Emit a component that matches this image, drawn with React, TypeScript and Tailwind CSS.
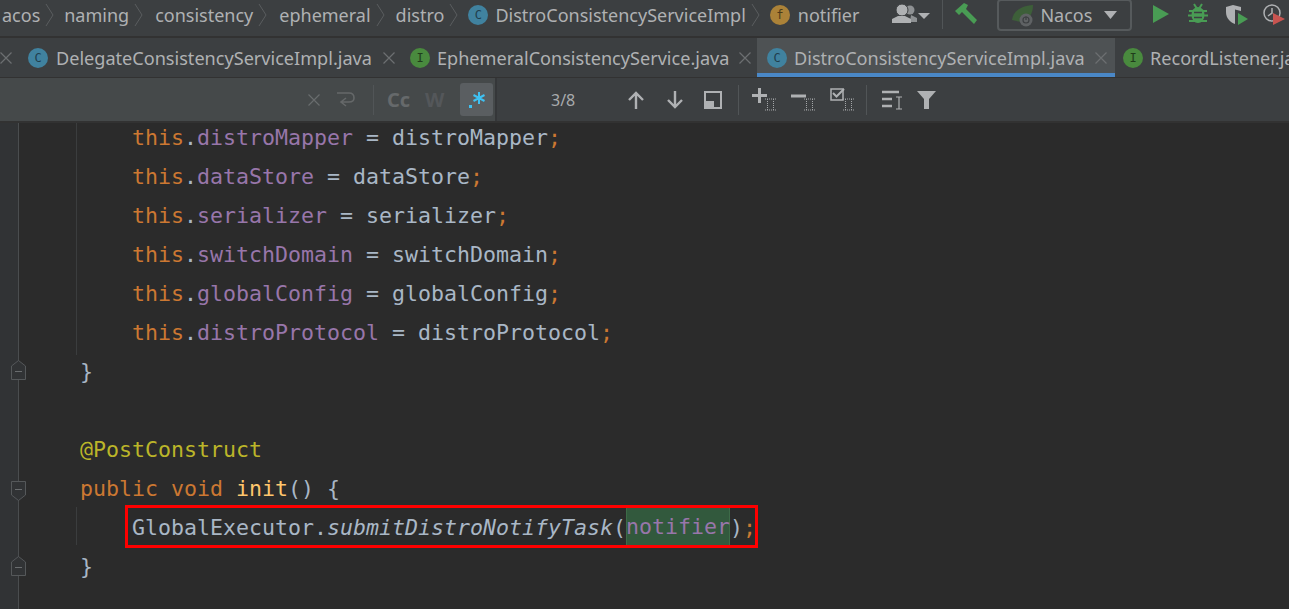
import React from 'react';

const uiFont = "font-['Noto_Sans','Open_Sans',sans-serif]";

function Chevron() {
  return (
    <svg width="9" height="24" viewBox="0 0 9 24" className="mx-[5px] shrink-0">
      <path d="M1 1 L8 12 L1 23" fill="none" stroke="#5a5d5f" strokeWidth="1" />
    </svg>
  );
}

function Badge({ letter, kind }: { letter: string; kind: 'c' | 'i' | 'f' }) {
  const tone =
    kind === 'c'
      ? 'bg-[#40829f] text-[#1f3e4d]'
      : kind === 'i'
      ? 'bg-[#498a3e] text-[#203c1b]'
      : 'bg-[#ab8238] text-[#4c3a18]';
  return (
    <span className={`w-5 h-5 rounded-full shrink-0 flex items-center justify-center text-[12px] leading-none font-['DejaVu_Sans_Mono',monospace] ${tone}`}>
      {letter}
    </span>
  );
}

function CloseX({ color = '#6c6f71' }: { color?: string }) {
  return (
    <svg width="12" height="12" viewBox="0 0 12 12" className="shrink-0">
      <path d="M0.5 0.5 L11.5 11.5 M11.5 0.5 L0.5 11.5" stroke={color} strokeWidth="1.2" />
    </svg>
  );
}

function Tab({ name, letter, kind, active, pl, gap, close, width }: { name: string; letter: string; kind: 'c' | 'i'; active?: boolean; pl: string; gap: string; close?: boolean; width: string }) {
  return (
    <div className={`h-full shrink-0 pt-px flex items-center relative ${pl} ${gap} ${width} ${active ? 'bg-[#4e5254]' : ''}`}>
      <Badge letter={letter} kind={kind} />
      <span className="text-[18.1px] text-[#afb1b3] whitespace-nowrap leading-none">{name}</span>
      {close && <span className="ml-[3px]"><CloseX /></span>}
      {active && <div className="absolute left-0 right-0 bottom-0 h-1 bg-[#4a88c7]" />}
    </div>
  );
}

function VSep({ h = 'h-[30px]', mx }: { h?: string; mx: string }) {
  return <div className={`w-px shrink-0 bg-[#515557] ${h} ${mx}`} />;
}

function IIMark() {
  return (
    <path
      d="M13 11 H18 M15.5 11 V22 M13 22 H18 M19 11 H24 M21.5 11 V22 M19 22 H24"
      stroke="#a3a6a8"
      strokeWidth="1"
      strokeDasharray="1 1"
      fill="none"
    />
  );
}

function ToolIcon({ children, w = 26, h = 24, cls }: { children: React.ReactNode; w?: number; h?: number; cls: string }) {
  return (
    <svg width={w} height={h} viewBox={`0 0 ${w} ${h}`} className={`shrink-0 ${cls}`}>
      {children}
    </svg>
  );
}

const cOrange = 'text-[#cc7832]';
const cPurple = 'text-[#9876aa]';

function ThisLine({ field, arg }: { field: string; arg: string }) {
  return (
    <Row indent>
      <span className={cOrange}>this</span>
      <span>.</span>
      <span className={cPurple}>{field}</span>
      <span> = {arg}</span>
      <span className={cOrange}>;</span>
    </Row>
  );
}

function Row({ children, indent }: { children?: React.ReactNode; indent?: boolean }) {
  return <div className={`h-[39px] leading-[39px] whitespace-pre ${indent ? 'pl-[52px]' : ''}`}>{children}</div>;
}

function FoldMark({ dir, cls }: { dir: 'up' | 'down'; cls: string }) {
  return (
    <svg width="15" height="20" viewBox="0 0 15 20" className={`absolute left-[11px] ${cls}`}>
      {dir === 'up' ? (
        <path d="M0.5 19.5 V6 L7.5 0.5 L14.5 6 V19.5 Z" fill="#313335" stroke="#55585a" />
      ) : (
        <path d="M0.5 0.5 V14 L7.5 19.5 L14.5 14 V0.5 Z" fill="#313335" stroke="#55585a" />
      )}
      <path d={dir === 'up' ? 'M4 11.5 H11' : 'M4 8.5 H11'} stroke="#6a6d6f" />
    </svg>
  );
}

export default function App() {
  return (
    <div className={`w-[1289px] h-[609px] overflow-hidden bg-[#2b2b2b] flex flex-col ${uiFont}`}>
      {/* navigation bar */}
      <div className="h-[36px] shrink-0 pb-[7px] bg-[#3c3f41] flex items-center text-[18px] text-[#afb1b3] leading-none whitespace-nowrap overflow-hidden">
        <span className="ml-[2px]">acos</span>
        <Chevron />
        <span className="ml-[5px]">naming</span>
        <Chevron />
        <span className="ml-[7px]">consistency</span>
        <Chevron />
        <span className="ml-[7px]">ephemeral</span>
        <Chevron />
        <span className="ml-[6px]">distro</span>
        <Chevron />
        <span className="ml-[5px] mr-[7px]"><Badge letter="C" kind="c" /></span>
        <span>DistroConsistencyServiceImpl</span>
        <Chevron />
        <span className="ml-[5px] mr-2"><Badge letter="f" kind="f" /></span>
        <span>notifier</span>

        <ToolIcon w={26} h={29} cls="ml-[33px]">
          <circle cx="18" cy="10" r="4.5" fill="#8e9193" />
          <path d="M19 15 L25 18 V22 H18 Z" fill="#8e9193" />
          <circle cx="10" cy="10" r="6" fill="#afb1b3" stroke="#3c3f41" strokeWidth="1" />
          <path d="M0 23 V19 L6 16 H13 L19 19 V23 Z" fill="#afb1b3" />
        </ToolIcon>
        <svg width="12" height="6" viewBox="0 0 12 6" className="shrink-0 mt-[2px]"><path d="M0 0 H12 L6 6 Z" fill="#afb1b3" /></svg>
        <VSep mx="ml-[12px]" h="h-[29px]" />
        <ToolIcon w={23} h={29} cls="ml-[12px]">
          <path d="M0 11 L9 3 L13 5 L11 9 L22 20 L19 24 L7 12 L4 15 Z" fill="#499c54" />
        </ToolIcon>
        <div className="ml-[19px] w-[135px] h-[32px] shrink-0 rounded-[4px] border-2 border-[#565a5c] flex items-center pl-[13px]">
          <svg width="23" height="28" viewBox="0 0 23 28" className="shrink-0">
            <path d="M0 19 C1 10 9 5 21 4 C21 12 18 18 9 21 Z" fill="#3d5f39" />
            <circle cx="14" cy="19" r="6.5" fill="#5f6264" />
            <circle cx="14" cy="19" r="3" fill="none" stroke="#3c3f41" strokeWidth="1.2" />
            <path d="M14 15.5 V19" stroke="#3c3f41" strokeWidth="1.2" />
          </svg>
          <span className="ml-[5px]">Nacos</span>
          <svg width="13" height="8" viewBox="0 0 13 8" className="shrink-0 ml-[12px]"><path d="M0 0 H13 L6.5 8 Z" fill="#afb1b3" /></svg>
        </div>
        <ToolIcon w={16} h={29} cls="ml-[21px]"><path d="M0 5 L16 14 L0 23 Z" fill="#499c54" /></ToolIcon>
        <ToolIcon w={20} h={29} cls="ml-[19px]">
          <path d="M6 4 L8.5 8 M14 4 L11.5 8 M1 11 H19 M0 15.5 H20 M1 21 H19" stroke="#499c54" strokeWidth="2" fill="none" />
          <ellipse cx="10" cy="15" rx="6.5" ry="8" fill="#499c54" />
          <path d="M6 12.5 H14 M6 17.5 H14" stroke="#3c3f41" strokeWidth="1.6" />
        </ToolIcon>
        <ToolIcon w={24} h={29} cls="ml-[18px]">
          <path d="M0 7 L7 5 L15 7 V11 L9 9.5 V24 C4 22 0 18 0 12 Z" fill="#afb1b3" />
          <path d="M12 13 L22 19 L12 25 Z" fill="#499c54" />
        </ToolIcon>
        <ToolIcon w={23} h={29} cls="ml-[13px]">
          <circle cx="9" cy="13" r="8" fill="none" stroke="#afb1b3" strokeWidth="1.5" />
          <path d="M9 8 V13 L5 16" fill="none" stroke="#afb1b3" strokeWidth="1.5" />
          <path d="M10 13 L22 19 L10 25 Z" fill="#c75450" />
        </ToolIcon>
      </div>
      <div className="h-[2px] shrink-0 bg-[#323232]" />

      {/* tabs */}
      <div className="h-[39px] shrink-0 bg-[#3c3f41] flex items-center overflow-hidden">
        <div className="w-[28px] shrink-0 flex"><CloseX /></div>
        <Tab name="DelegateConsistencyServiceImpl.java" letter="C" kind="c" pl="" gap="gap-2" close width="w-[382px]" />
        <Tab name="EphemeralConsistencyService.java" letter="I" kind="i" pl="" gap="gap-[7px]" close width="w-[347px]" />
        <Tab name="DistroConsistencyServiceImpl.java" letter="C" kind="c" pl="pl-[10px]" gap="gap-[7px]" close active width="w-[358px]" />
        <Tab name="RecordListener.java" letter="I" kind="i" pl="pl-2" gap="gap-[7px]" width="w-[174px]" />
      </div>
      <div className="h-px shrink-0 bg-[#323232]" />

      {/* find in file bar */}
      <div className="h-[43px] shrink-0 flex items-center bg-[#3c3f41] leading-none">
        <div className="w-[497px] h-full shrink-0 bg-[#45494a] flex items-center border-r-2 border-[#353739]">
          <span className="ml-[308px]"><CloseX color="#696c6e" /></span>
          <svg width="20" height="18" viewBox="0 0 20 18" className="shrink-0 ml-[16px]">
            <path d="M1 2 H13 Q18 2 18 7 Q18 11 13 11 H6 M10 7 L5 11 L10 15" fill="none" stroke="#656869" strokeWidth="1.6" />
          </svg>
          <VSep mx="ml-[17px]" />
          <span className="ml-[13px] w-[25px] font-bold text-[#66696b] text-[20px]">Cc</span>
          <span className="ml-[13px] w-[21px] font-bold text-[#54575a] text-[20px]">W</span>
          <div className="ml-[14px] w-[33px] h-[33px] shrink-0 rounded-[3px] bg-[#5a5e61] flex items-center justify-center">
            <svg width="16" height="18" viewBox="0 0 16 18">
              <path d="M10 1 V13 M4.5 4 L15.5 10 M15.5 4 L4.5 10" stroke="#3fc1f2" strokeWidth="2" />
              <rect x="0" y="14" width="3" height="3" fill="#3fc1f2" />
            </svg>
          </div>
        </div>
        <span className="ml-[54px] w-[25px] text-[16px] text-[#a9abad] whitespace-nowrap">3/8</span>
        <svg width="16" height="18" viewBox="0 0 16 18" className="shrink-0 ml-[52px]"><path d="M8 18 V2 M1 9 L8 2 L15 9" fill="none" stroke="#afb1b3" strokeWidth="2.4" /></svg>
        <svg width="16" height="18" viewBox="0 0 16 18" className="shrink-0 ml-[23px]"><path d="M8 0 V16 M1 9 L8 16 L15 9" fill="none" stroke="#afb1b3" strokeWidth="2.4" /></svg>
        <svg width="18" height="18" viewBox="0 0 18 18" className="shrink-0 ml-[21px]">
          <rect x="1" y="1" width="16" height="16" fill="none" stroke="#afb1b3" strokeWidth="2" />
          <rect x="1" y="10" width="9" height="7" fill="#afb1b3" />
        </svg>
        <VSep mx="ml-[16px]" />
        <ToolIcon cls="ml-[13px]">
          <path d="M7.5 0 V15 M0 7.5 H15" stroke="#afb1b3" strokeWidth="3" />
          <IIMark />
        </ToolIcon>
        <ToolIcon cls="ml-[13px]">
          <path d="M0 8 H15" stroke="#afb1b3" strokeWidth="3" />
          <IIMark />
        </ToolIcon>
        <ToolIcon cls="ml-[13px]">
          <rect x="1" y="1" width="12" height="11" fill="none" stroke="#afb1b3" strokeWidth="1.5" />
          <path d="M3 5 L6.5 8.5 L14 1" fill="none" stroke="#afb1b3" strokeWidth="2" />
          <IIMark />
        </ToolIcon>
        <VSep mx="ml-[10px]" />
        <svg width="21" height="20" viewBox="0 0 21 20" className="shrink-0 ml-[15px]">
          <path d="M0 2 H17 M0 9 H10 M0 16 H10" stroke="#afb1b3" strokeWidth="2.6" />
          <path d="M14 7 H20 M17 7 V19 M14 19 H20" stroke="#afb1b3" strokeWidth="1.2" fill="none" />
        </svg>
        <svg width="19" height="18" viewBox="0 0 19 18" className="shrink-0 ml-[14px]"><path d="M0 0 H19 L12 8 V18 H7 V8 Z" fill="#afb1b3" /></svg>
      </div>
      <div className="h-[2px] shrink-0 bg-[#323232]" />

      {/* editor */}
      <div className="flex-1 min-h-0 flex overflow-hidden relative">
        <div className="w-[18px] shrink-0 bg-[#313335]" />
        <div className="w-px shrink-0 bg-[#4a4d4f]" />
        <FoldMark dir="up" cls="top-[237px]" />
        <FoldMark dir="down" cls="top-[358px]" />
        <FoldMark dir="up" cls="top-[433px]" />
        <div className="absolute left-[76px] top-0 w-px h-[232px] bg-[#3b3d3e]" />
        <div className="absolute left-[76px] top-[384px] w-px h-[38px] bg-[#3b3d3e]" />
        <div className="pl-[61px] -mt-[5px] text-[21.6px] text-[#a9b7c6] font-['DejaVu_Sans_Mono',monospace]">
          <ThisLine field="distroMapper" arg="distroMapper" />
          <ThisLine field="dataStore" arg="dataStore" />
          <ThisLine field="serializer" arg="serializer" />
          <ThisLine field="switchDomain" arg="switchDomain" />
          <ThisLine field="globalConfig" arg="globalConfig" />
          <ThisLine field="distroProtocol" arg="distroProtocol" />
          <Row>{'}'}</Row>
          <Row />
          <Row><span className="text-[#bbb529]">@PostConstruct</span></Row>
          <Row>
            <span className={cOrange}>public void </span>
            <span className="text-[#ffc66d]">init</span>
            <span>() {'{'}</span>
          </Row>
          <Row indent>
            <span className="relative inline-block">
              GlobalExecutor.<span className="italic">submitDistroNotifyTask</span>(
              <span className={`bg-[#32593d] inline-block h-[37px] leading-[37px] align-top shadow-[inset_1px_0_#3d6b48,inset_-1px_0_#3d6b48] ${cPurple}`}>notifier</span>
              ){<span className={cOrange}>;</span>}
              <span className="absolute -left-[7px] -top-[3px] -right-[2px] h-[43px] border-[3px] border-[#ff0000] pointer-events-none" />
            </span>
          </Row>
          <Row>{'}'}</Row>
        </div>
      </div>
    </div>
  );
}
